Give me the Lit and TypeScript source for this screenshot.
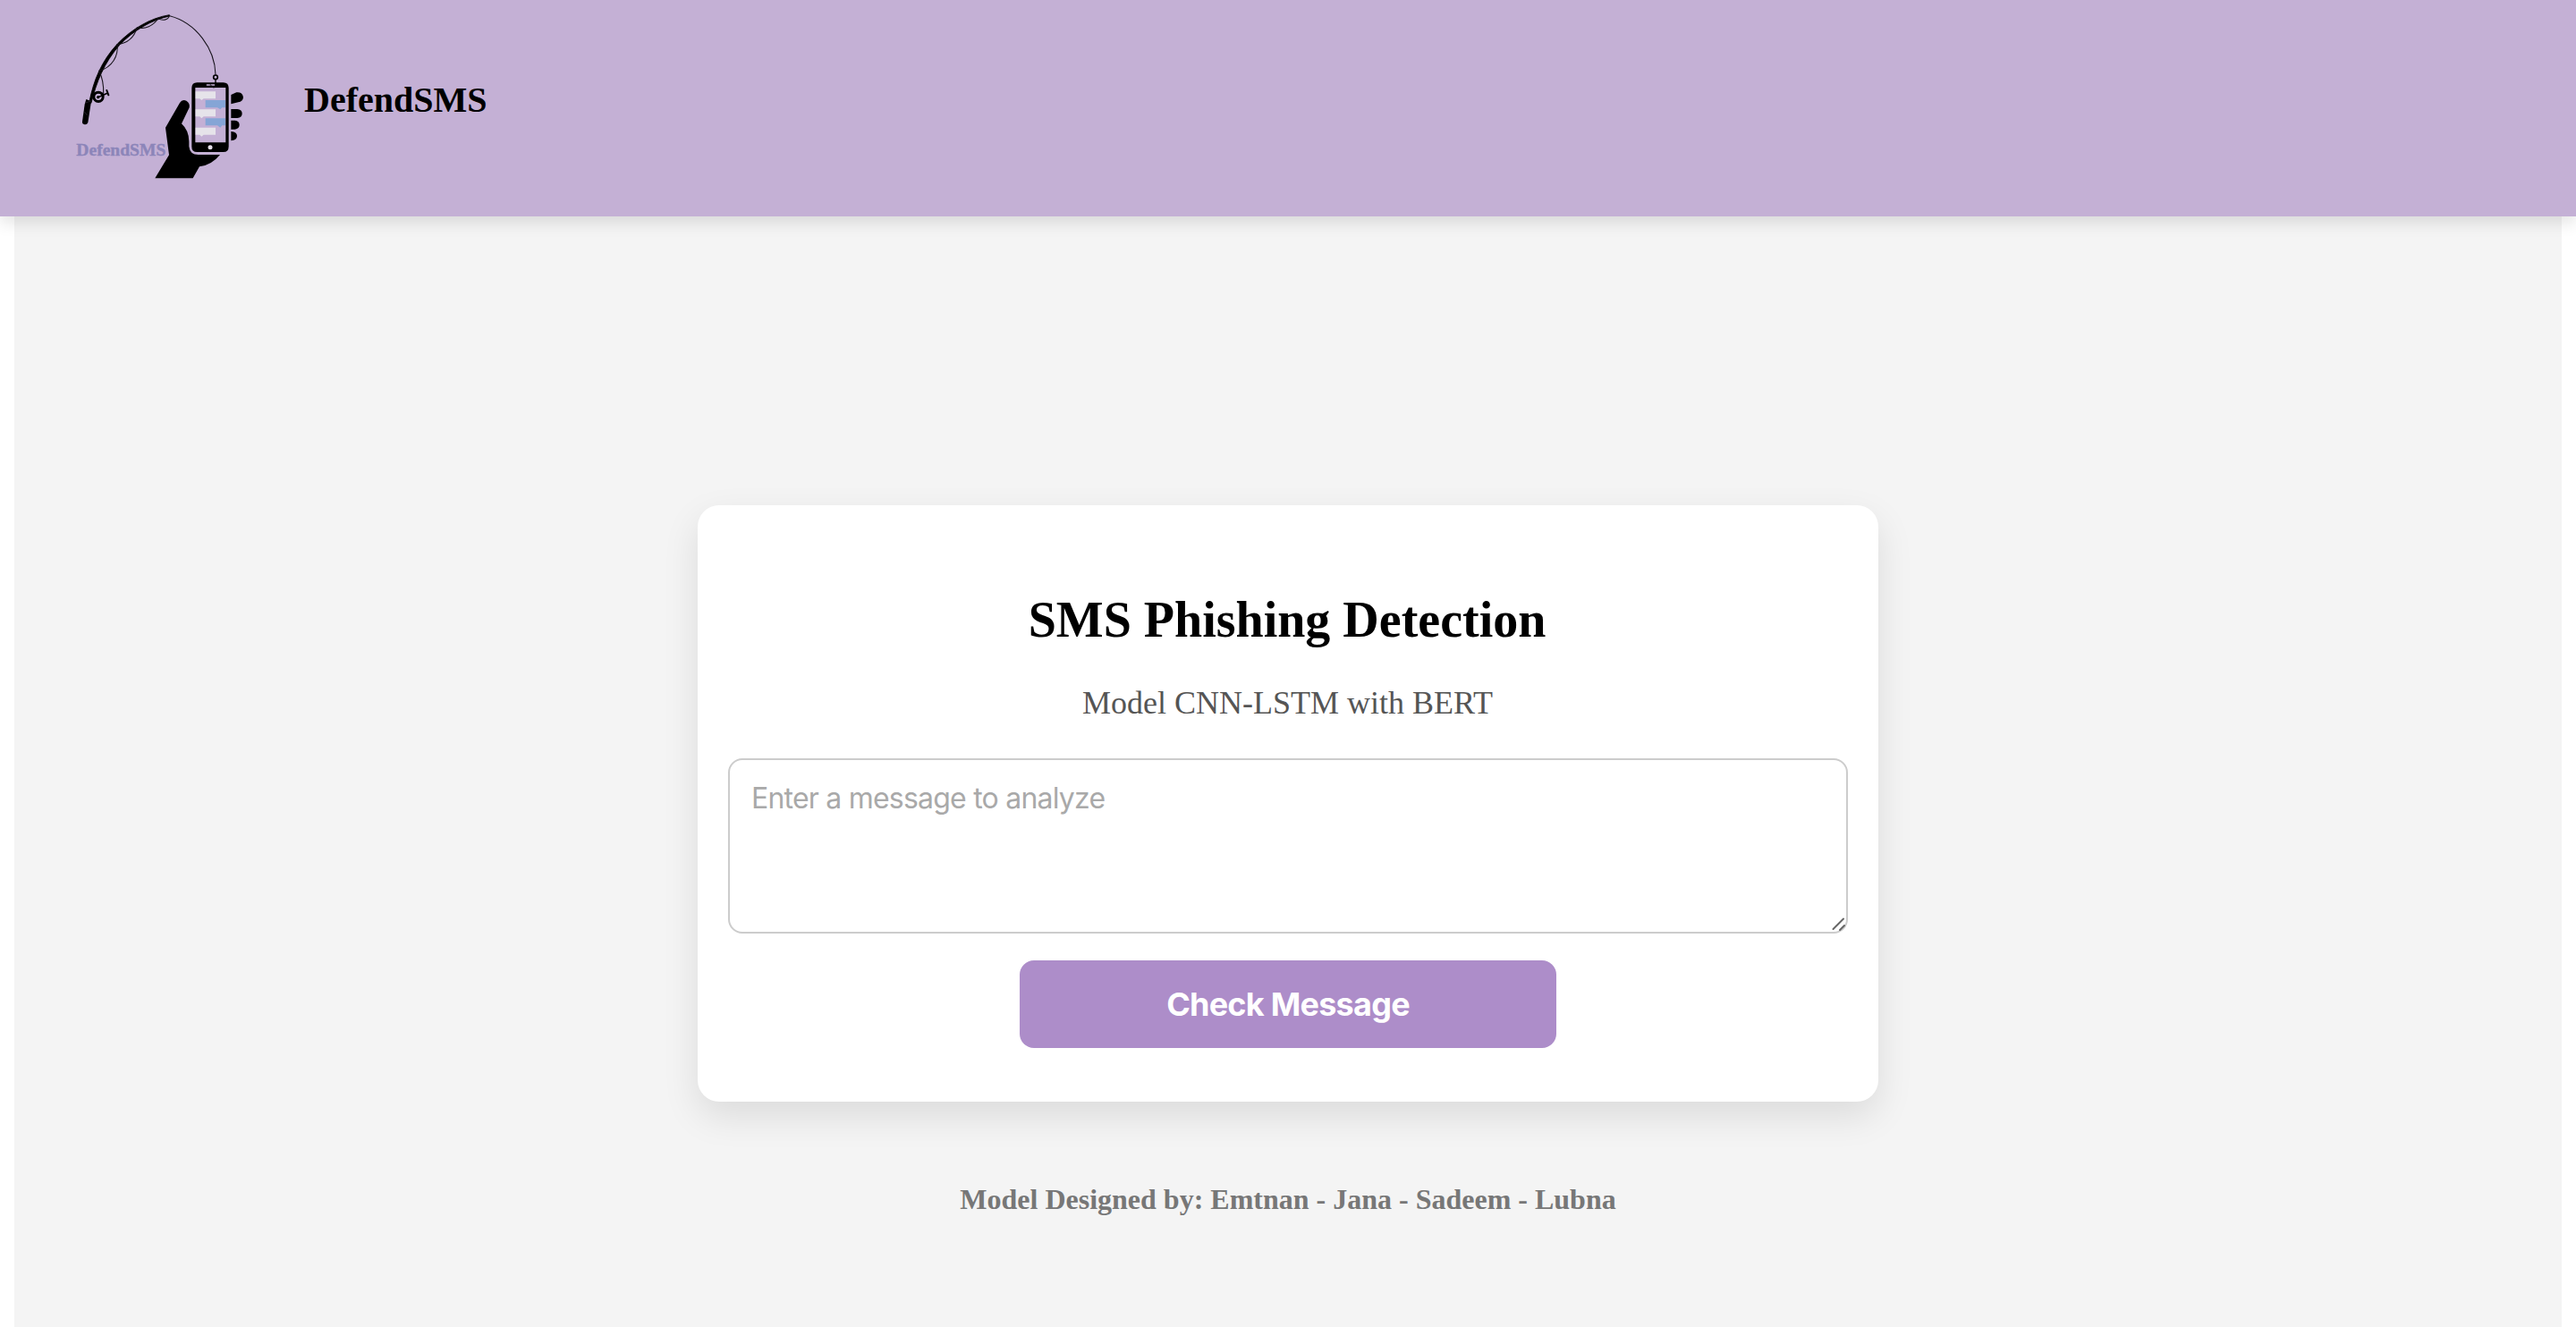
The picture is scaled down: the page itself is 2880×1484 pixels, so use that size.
import { LitElement, html, css } from "lit";
import { customElement } from "lit/decorators.js";

@customElement("brand-logo")
class BrandLogo extends LitElement {
  static styles = css`
    :host { display: block; width: 240px; height: 220px; }
    .art { display: block; width: 100%; height: 100%; }
    .word { font: bold 58px "Liberation Serif", serif; fill: #8c85b9; stroke: #8c85b9; stroke-width: 1.2px; }
  `;

  render() {
    return html`
      <svg class="art" viewBox="0 0 720 660" fill="none" stroke-linecap="round">
        <!-- rod -->
        <path d="M120 340C134 270 160 205 214 147C262 97 325 60 388 50L389 54C328 67 268 102 221 151C168 212 144 275 126 345Z" fill="#000" stroke="#000" stroke-width="2.500"/>
        <path d="M109 333L126 340L115 411Q112 419 104 418Q95 416 96 408L104 350Z" fill="#000"/>
        <path d="M107 345L124 339M104 376L112 386" stroke="#4b4353" stroke-width="1.500"/>
        <!-- guide loops and line -->
        <g stroke="#17131b" stroke-width="3.200">
          <path d="M388 53C384 68 363 71 351 61C334 88 306 99 280 92C270 126 245 146 213 149C218 187 197 226 152 238C165 263 168 285 167 315"/>
          <path d="M389 53C478 76 541 164 543 250"/>
        </g>
        <!-- reel -->
        <circle cx="150" cy="325" r="15.500" stroke="#000" stroke-width="9"/>
        <path d="M126 321L135 323M149 326L180 313" stroke="#000" stroke-width="5"/>
        <path d="M178 303L184 319" stroke="#000" stroke-width="6"/>
        <circle cx="149" cy="326" r="5" fill="#000"/>
        <!-- hook ring -->
        <circle cx="543" cy="259" r="7" stroke="#000" stroke-width="5"/>
        <path d="M543 267V289Q538 297 531 289" stroke="#000" stroke-width="4"/>
        <text class="word" x="76" y="523" textLength="300" lengthAdjust="spacingAndGlyphs">DefendSMS</text>
        <!-- hand -->
        <path d="M340 598L387 520L375 428L423 345Q431 332 445 338Q458 346 455 361L429 415Q454 438 454 475V491Q457 519 485 519H558Q530 554 489 559L467 598Z" fill="#000"/>
        <path d="M595 318L613 310Q633 308 636 326Q635 340 619 343L595 349Z" fill="#000"/>
        <path d="M595 366H616Q632 368 632 381Q632 394 616 396H595Z" fill="#000"/>
        <path d="M595 404H608Q623 406 623 419Q623 431 608 434H595Z" fill="#000"/>
        <path d="M595 441Q615 442 615 456Q615 470 595 472Z" fill="#000"/>
        <!-- phone -->
        <path fill-rule="evenodd" d="M481 277H569Q587 277 587 295V492Q587 510 569 510H481Q463 510 463 492V295Q463 277 481 277ZM475 294V478H577V294Z" fill="#000"/>
        <path d="M514 285H523M528 285H539" stroke="#c4b0d5" stroke-width="4"/>
        <path d="M530 288L536 293L543 288V277" stroke="#000" stroke-width="3"/>
        <circle cx="525" cy="494" r="7.500" fill="#e5dfea"/>
        <g fill="#e6e3ea">
          <path d="M476 307H543V331H503L496 336L490 331H476Z"/>
          <path d="M476 367H543V391H503L496 397L490 391H476Z"/>
          <path d="M476 428H543V452H503L496 458L490 452H476Z"/>
        </g>
        <g fill="#85a5d6">
          <path d="M509 336H576V361H565L559 367L549 361H509Z"/>
          <path d="M509 397H576V421H565L559 428L549 421H509Z"/>
        </g>
      </svg>
    `;
  }
}

@customElement("app-root")
class AppRoot extends LitElement {
  static styles = css`
    :host {
      display: flex;
      flex-direction: column;
      height: 1484px;
      overflow: hidden;
      background: #fff;
      font-family: "Liberation Serif", "Times New Roman", serif;
    }
    * { box-sizing: border-box; }
    .header {
      position: relative;
      z-index: 1;
      flex: none;
      display: flex;
      gap: 40px;
      height: 242px;
      padding-left: 60px;
      background: #c4b0d5;
      box-shadow: 0 8px 16px rgba(0, 0, 0, 0.1);
    }
    .brand {
      margin: 89px 0 0;
      font-size: 40px;
      line-height: 46px;
      font-weight: bold;
      color: #000;
    }
    .main {
      flex: 1;
      display: flex;
      flex-direction: column;
      align-items: center;
      margin: 0 16px;
      padding-top: 323px;
      background: #f4f4f4;
    }
    .card {
      flex: none;
      display: flex;
      flex-direction: column;
      align-items: center;
      width: 1320px;
      height: 667px;
      padding: 96px 34px 60px;
      border-radius: 24px;
      background: #fff;
      box-shadow: 0 16px 40px rgba(0, 0, 0, 0.1);
    }
    .title {
      margin: 0 2px 0 0;
      font-size: 56px;
      line-height: 64px;
      font-weight: bold;
      color: #000;
    }
    .subtitle {
      margin: 40px 1px 0 0;
      font-size: 36px;
      line-height: 42px;
      color: #555;
    }
    .message {
      display: block;
      width: 1252px;
      height: 196px;
      margin: 41px 0 0;
      padding: 24px;
      border: 2px solid #ccc;
      border-radius: 16px;
      outline: none;
      resize: none;
      background: #fff;
      font: 32px/38px Inter, sans-serif;
      letter-spacing: -0.78px;
      color: #000;
    }
    .message::placeholder { color: #a9a9a9; opacity: 1; }
    .field { position: relative; }
    .grip {
      position: absolute;
      right: 2px;
      bottom: 2px;
      width: 16px;
      height: 16px;
      pointer-events: none;
    }
    .check {
      width: 600px;
      height: 98px;
      margin: 30px 0 0;
      padding: 0;
      border: 0;
      border-radius: 16px;
      background: #ad8dc9;
      color: #fff;
      font: bold 36px/44px Inter, sans-serif;
      letter-spacing: -0.75px;
    }
    .credits {
      margin: 91px 0 0;
      font-size: 32px;
      line-height: 36px;
      font-weight: bold;
      color: #777;
    }
  `;

  render() {
    return html`
      <header class="header">
        <brand-logo></brand-logo>
        <h1 class="brand">DefendSMS</h1>
      </header>
      <main class="main">
        <section class="card">
          <h2 class="title">SMS Phishing Detection</h2>
          <p class="subtitle">Model CNN-LSTM with BERT</p>
          <div class="field">
            <textarea class="message" placeholder="Enter a message to analyze"></textarea>
            <svg class="grip" viewBox="0 0 16 16" stroke="#666" stroke-width="2" stroke-linecap="round">
              <path d="M1.500 13L13 1.500M9 14L14 9"/>
            </svg>
          </div>
          <button class="check">Check Message</button>
        </section>
        <p class="credits">Model Designed by: Emtnan - Jana - Sadeem - Lubna</p>
      </main>
    `;
  }
}
